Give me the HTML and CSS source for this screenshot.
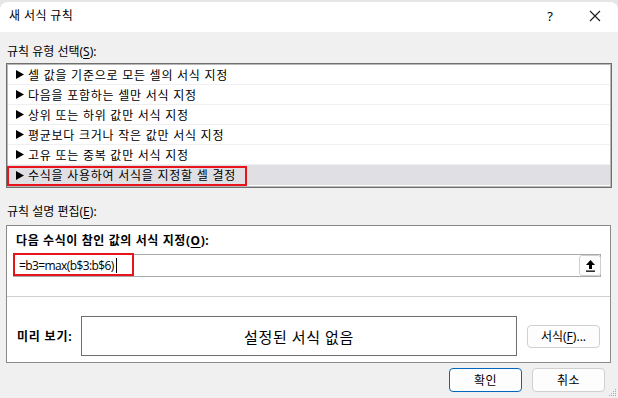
FILE: index.html
```html
<!DOCTYPE html>
<html lang="ko">
<head>
<meta charset="utf-8">
<title>새 서식 규칙</title>
<link rel="stylesheet" href="styles.css">
</head>
<body>
<div class="window">
  <header class="titlebar">
    <span class="title">새 서식 규칙</span>
    <span class="help">?</span>
    <span class="close">
      <svg width="12" height="12" viewBox="0 0 12 12"><path d="M1 1 L11 11 M11 1 L1 11" stroke="#1a1a1a" stroke-width="1.1" fill="none"/></svg>
    </span>
  </header>
  <main class="content">
    <div class="label">규칙 유형 선택(<u>S</u>):</div>
    <ul class="rules">
      <li class="rule"><svg class="tri" width="8" height="9" viewBox="0 0 8 9"><path d="M0 0 L8 4.5 L0 9 Z" fill="#000"/></svg>셀 값을 기준으로 모든 셀의 서식 지정</li>
      <li class="rule"><svg class="tri" width="8" height="9" viewBox="0 0 8 9"><path d="M0 0 L8 4.5 L0 9 Z" fill="#000"/></svg>다음을 포함하는 셀만 서식 지정</li>
      <li class="rule"><svg class="tri" width="8" height="9" viewBox="0 0 8 9"><path d="M0 0 L8 4.5 L0 9 Z" fill="#000"/></svg>상위 또는 하위 값만 서식 지정</li>
      <li class="rule"><svg class="tri" width="8" height="9" viewBox="0 0 8 9"><path d="M0 0 L8 4.5 L0 9 Z" fill="#000"/></svg>평균보다 크거나 작은 값만 서식 지정</li>
      <li class="rule"><svg class="tri" width="8" height="9" viewBox="0 0 8 9"><path d="M0 0 L8 4.5 L0 9 Z" fill="#000"/></svg>고유 또는 중복 값만 서식 지정</li>
      <li class="rule selected"><svg class="tri" width="8" height="9" viewBox="0 0 8 9"><path d="M0 0 L8 4.5 L0 9 Z" fill="#000"/></svg>수식을 사용하여 서식을 지정할 셀 결정<span class="mark mark-rule"></span></li>
    </ul>
    <div class="label label-desc">규칙 설명 편집(<u>E</u>):</div>
    <section class="desc">
      <div class="desc-title">다음 수식이 참인 값의 서식 지정(<u>O</u>):</div>
      <div class="formula">
        <span class="ftext">=b3=max(b$3:b$6)</span><span class="caret"></span>
        <span class="mark mark-formula"></span>
        <span class="collapse">
          <svg width="11" height="13" viewBox="0 0 11 13"><path d="M5.5 1 L10 6 H7 V10 H4 V6 H1 Z" fill="#000"/><rect x="1" y="11.5" width="9" height="1.3" fill="#000"/></svg>
        </span>
      </div>
      <div class="sep"></div>
      <div class="preview-row">
        <span class="plabel">미리 보기:</span>
        <div class="preview">설정된 서식 없음</div>
        <button class="btn btn-fmt">서식(<u>F</u>)...</button>
      </div>
    </section>
    <div class="actions">
      <button class="btn btn-primary">확인</button>
      <button class="btn">취소</button>
    </div>
  </main>
  <span class="grip">
    <svg width="8" height="8" viewBox="0 0 8 8" fill="#a8a8a8"><rect x="6" y="0" width="1" height="1"/><rect x="4" y="2" width="1" height="1"/><rect x="6" y="2" width="1" height="1"/><rect x="2" y="4" width="1" height="1"/><rect x="4" y="4" width="1" height="1"/><rect x="6" y="4" width="1" height="1"/><rect x="0" y="6" width="1" height="1"/><rect x="2" y="6" width="1" height="1"/><rect x="4" y="6" width="1" height="1"/><rect x="6" y="6" width="1" height="1"/></svg>
  </span>
</div>
</body>
</html>
```

FILE: styles.css
```css
* { box-sizing: border-box; }
html, body { margin: 0; padding: 0; }
body {
  width: 618px;
  height: 398px;
  overflow: hidden;
  background: #e6e6e6;
  font-family: "Noto Sans", "Noto Sans CJK KR", sans-serif;
  font-size: 12px;
  color: #000;
}
.window {
  position: relative;
  margin-top: 2px;
  width: 618px;
  height: 396px;
  background: #f0f0f0;
  border-radius: 8px 8px 0 0;
  overflow: hidden;
}
.titlebar {
  height: 30px;
  background: #fff;
  display: flex;
  align-items: center;
  padding: 0 0 2px 9px;
}
.title { flex: 1; font-size: 12px; line-height: 16px; letter-spacing: 0.4px; }
.help { width: 14px; text-align: center; font-size: 13px; margin-right: 32px; }
.close { width: 12px; height: 12px; display: flex; margin-right: 17px; }
.content { padding: 12px 6px 0 6px; }
.label { line-height: 16px; height: 16px; padding-left: 1px; margin-bottom: 3px; }
.label-desc { margin-top: 16px; margin-bottom: 5px; }
u { text-decoration-thickness: 1px; text-underline-offset: 2px; }
.rules {
  list-style: none;
  margin: 0;
  padding: 1px 0 0 0;
  height: 125px;
  background: #fff;
  border: 1px solid #6f6f6f;
  box-shadow: inset 0 0 0 1px #b8b8b8;
  width: 606px;
}
.rule {
  position: relative;
  height: 20px;
  display: flex;
  align-items: center;
  padding-left: 8px;
  border-bottom: 1px solid #f0f0f0;
  margin: 0 1px;
  letter-spacing: 0.75px;
}
.rule .tri { margin-right: 4px; flex: none; }
.rule.selected { background: #dfdfe4; border-bottom: none; }
.mark { position: absolute; border: 2px solid #e8141b; pointer-events: none; }
.mark-rule { left: -1px; top: 1px; width: 240px; height: 20px; }
.desc {
  width: 605px;
  height: 138px;
  background: #fff;
  border: 1px solid #8a8a8a;
  padding: 7px 8px 0 6px;
}
.desc-title { font-weight: bold; line-height: 16px; padding-left: 3px; margin-bottom: 5px; letter-spacing: 0.6px; }
.formula {
  position: relative;
  width: 588px;
  height: 23px;
  border: 1px solid #a9a9a9;
  display: flex;
  align-items: center;
  padding-left: 5px;
}
.ftext { font-family: "Open Sans", "Noto Sans", sans-serif; font-size: 12px; letter-spacing: -0.6px; }
.caret { width: 1px; height: 15px; background: #000; margin-left: 2px; }
.mark-formula { left: -1px; top: -2px; width: 121px; height: 23px; }
.collapse {
  margin-left: auto;
  margin-right: -1px;
  width: 22px;
  height: 21px;
  border: 1px solid #cfcfcf;
  border-radius: 3px;
  background: #fdfdfd;
  display: flex;
  align-items: center;
  justify-content: center;
}
.sep { height: 1px; background: #cfcfcf; margin: 19px -8px 0 -6px; }
.preview-row { display: flex; align-items: center; margin-top: 19px; }
.plabel { width: 68px; padding-left: 4px; font-weight: bold; white-space: nowrap; letter-spacing: 0.8px; }
.preview {
  width: 436px;
  height: 40px;
  border: 1px solid #6e6e6e;
  display: flex;
  align-items: center;
  justify-content: center;
  font-size: 15px;
  letter-spacing: 0.6px;
}
.btn {
  font-family: "Noto Sans", "Noto Sans CJK KR", sans-serif;
  font-size: 12px;
  color: #000;
  background: #fdfdfd;
  border: 1px solid #d0d0d0;
  border-radius: 4px;
  width: 73px;
  height: 23px;
  padding: 0;
  display: flex;
  align-items: center;
  justify-content: center;
}
.btn-fmt { margin-left: 10px; }
.actions { display: flex; justify-content: flex-end; gap: 10px; margin-top: 5px; padding-right: 7px; }
.actions .btn { height: 24px; letter-spacing: 0.5px; }
.btn-primary { border-color: #0067c0; }
.grip { position: absolute; right: 1px; bottom: 1px; width: 8px; height: 8px; display: flex; }
```
